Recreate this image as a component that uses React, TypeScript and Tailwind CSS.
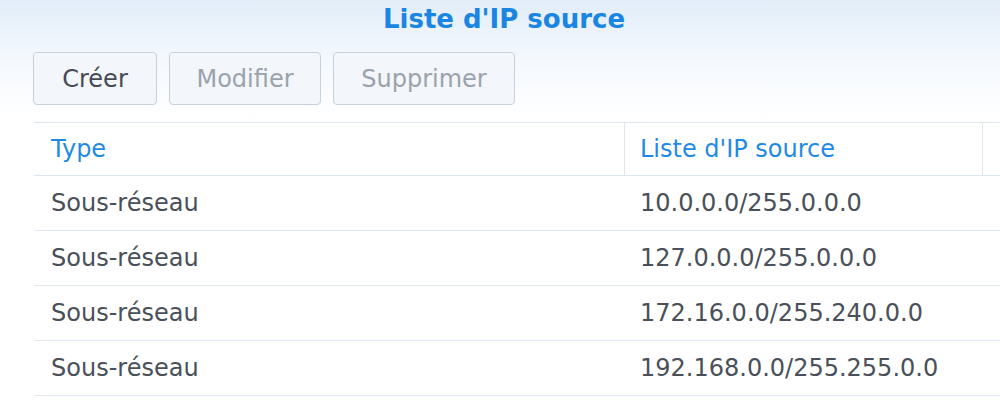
import React from "react";

const rows = [
  { type: "Sous-réseau", ip: "10.0.0.0/255.0.0.0" },
  { type: "Sous-réseau", ip: "127.0.0.0/255.0.0.0" },
  { type: "Sous-réseau", ip: "172.16.0.0/255.240.0.0" },
  { type: "Sous-réseau", ip: "192.168.0.0/255.255.0.0" },
];

export default function App() {
  return (
    <div className="w-[1000px] h-[408px] overflow-hidden bg-[linear-gradient(to_bottom,#e2edf9_0px,#f4f8fd_60px,#ffffff_120px)] font-['DejaVu_Sans',sans-serif]">
      {/* Title */}
      <div className="h-[39px] leading-[39px] text-center text-[26px] font-bold text-[#1a86e2] pl-[8px]">
        Liste d'IP source
      </div>

      {/* Toolbar */}
      <div className="flex gap-[12px] pl-[33px] mt-[13px]">
        <button className="h-[53px] w-[124px] rounded-[4px] border border-[#c6d1dc] bg-[#f3f6fa] text-[24px] text-[#454b54]">
          Créer
        </button>
        <button className="h-[53px] w-[152px] rounded-[4px] border border-[#c6d1dc] bg-[#f3f6fa] text-[24px] text-[#9aa3ad]">
          Modifier
        </button>
        <button className="h-[53px] w-[182px] rounded-[4px] border border-[#c6d1dc] bg-[#f3f6fa] text-[24px] text-[#9aa3ad]">
          Supprimer
        </button>
      </div>

      {/* Table */}
      <div className="ml-[34px] mt-[17px] w-[1100px] text-[24px]">
        <div className="grid grid-cols-[591px_358px_1fr] border-t border-b border-[#dde5ee] h-[54px] bg-white">
          <div className="flex items-center pl-[17px] border-r border-[#dde5ee] text-[#1f8ae6]">Type</div>
          <div className="flex items-center pl-[15px] border-r border-[#dde5ee] text-[#1f8ae6]">Liste d'IP source</div>
          <div />
        </div>
        {rows.map((r, i) => (
          <div key={i} className="grid grid-cols-[591px_358px_1fr] border-b border-[#e3e9f0] h-[55px] bg-white text-[#4a5059]">
            <div className="flex items-center pl-[17px]">{r.type}</div>
            <div className="flex items-center pl-[15px]">{r.ip}</div>
            <div />
          </div>
        ))}
      </div>
    </div>
  );
}
